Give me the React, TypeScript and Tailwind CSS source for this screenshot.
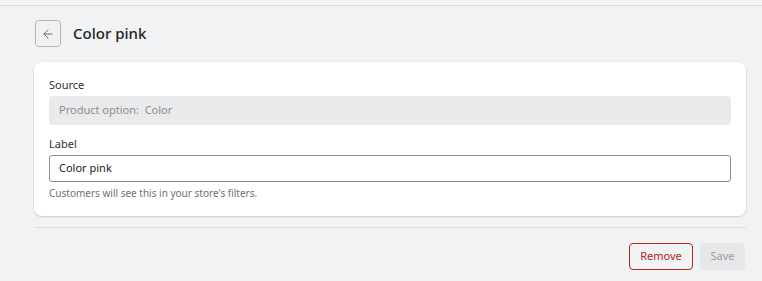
import { ArrowLeft } from "lucide-react";

export default function App() {
  return (
    <div className="h-[281px] w-[762px] overflow-hidden bg-[#f1f2f4] font-['Noto_Sans',sans-serif] text-[#303030]">
      <div className="h-[6px] border-b border-[#dcdde0] bg-[#f4f5f6]" />

      <div className="pl-[34px] pr-[16px]">
        <div className="flex items-center gap-[12px] pt-[14px] pl-px">
          <button className="flex h-[27px] w-[26px] items-center justify-center rounded-[4px] border border-[#b5b7ba] bg-[#f1f2f4] text-[#5c5f62]">
            <ArrowLeft size={14} strokeWidth={1.6} />
          </button>
          <h1 className="text-[15px] font-medium text-[#202223]">Color pink</h1>
        </div>

        <div className="mt-[15px] rounded-[8px] bg-white px-[15px] pt-[15px] pb-[16px] shadow-[0_1px_2px_rgba(0,0,0,0.12),0_0_0_1px_rgba(0,0,0,0.03)]">
          <div className="text-[11px] leading-[16px] text-[#303030]">Source</div>
          <div className="mt-[3px] flex h-[29px] items-center rounded-[4px] bg-[#e9eaec] px-[10px] text-[11px] text-[#8a8c8f]">
            Product option:&nbsp; Color
          </div>

          <div className="mt-[11px] text-[11px] leading-[16px] text-[#303030]">Label</div>
          <div className="mt-[3px] flex h-[27px] items-center rounded-[3px] border border-[#8c9196] px-[9px] text-[11px] text-[#202223]">
            Color pink
          </div>
          <div className="mt-[4px] text-[10px] leading-[14px] text-[#6d7175]">
            Customers will see this in your store's filters.
          </div>
        </div>

        <div className="mt-[11px] border-t border-[#dcdde0]" />

        <div className="mt-[15px] flex justify-end gap-[7px] pr-px">
          <button className="flex h-[27px] w-[64px] items-center justify-center rounded-[4px] border border-[#b3261e] bg-transparent text-[11px] text-[#b3261e]">
            Remove
          </button>
          <button className="flex h-[27px] w-[45px] items-center justify-center rounded-[4px] bg-[#e6e7e9] text-[11px] text-[#9a9c9f]">
            Save
          </button>
        </div>
      </div>
    </div>
  );
}
